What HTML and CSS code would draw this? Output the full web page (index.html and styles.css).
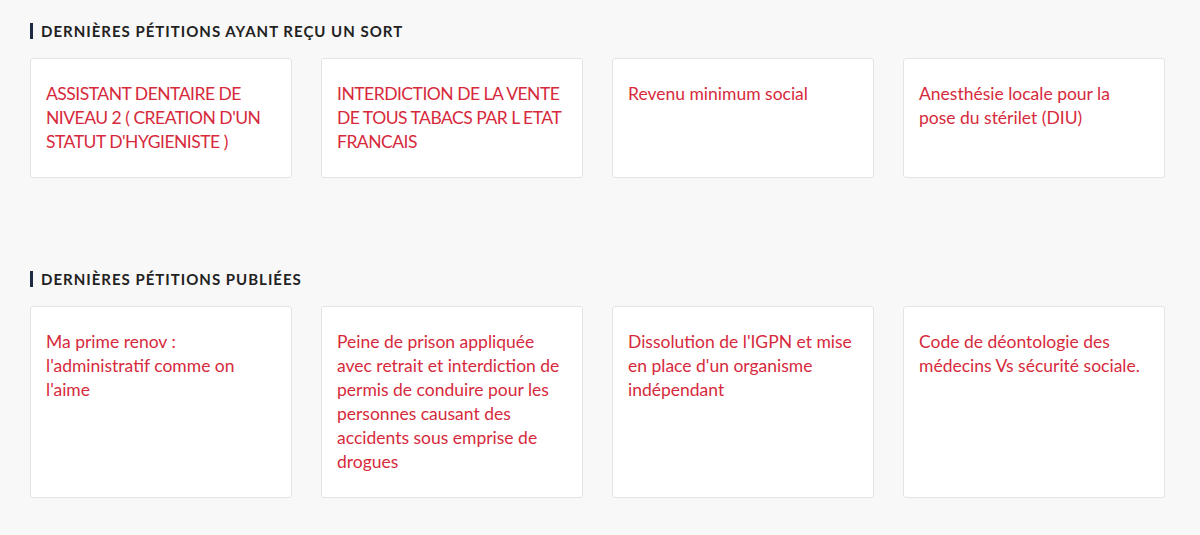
FILE: index.html
```html
<!doctype html>
<html lang="fr">
 <head>
  <meta charset="UTF-8">
  <title>Pétitions</title>
  <link rel="stylesheet" href="styles.css">
 </head>
 <body>
  <div id="all">
   <!-- pétitions ayant reçu un sort -->
   <section class="bloc">
    <h2 class="tit">Dernières pétitions ayant reçu un sort</h2>
    <div class="cards">
     <a class="card maj" href="#">ASSISTANT DENTAIRE DE NIVEAU 2 ( CREATION D'UN STATUT D'HYGIENISTE )</a>
     <a class="card maj" href="#">INTERDICTION DE LA VENTE DE TOUS TABACS PAR L ETAT FRANCAIS</a>
     <a class="card" href="#">Revenu minimum social</a>
     <a class="card" href="#">Anesthésie locale pour la pose du stérilet (DIU)</a>
    </div>
   </section>

   <!-- pétitions publiées -->
   <section class="bloc">
    <h2 class="tit">Dernières pétitions publiées</h2>
    <div class="cards">
     <a class="card" href="#">Ma prime renov : l'administratif comme on l'aime</a>
     <a class="card" href="#">Peine de prison appliquée avec retrait et interdiction de permis de conduire pour les personnes causant des accidents sous emprise de drogues</a>
     <a class="card" href="#">Dissolution de l'IGPN et mise en place d'un organisme indépendant</a>
     <a class="card" href="#">Code de déontologie des médecins Vs sécurité sociale.</a>
    </div>
   </section>
  </div>
 </body>
</html>
```

FILE: styles.css
```css
body {
margin: 0;
background: #f8f8f8;
font-family: Lato, "Open Sans", sans-serif;
}

#all {
width: 1135px;
padding: 23px 0 0 30px;
}

.bloc {
margin-bottom: 93px;
}

/* titre avec petite barre */
.tit {
margin: 0 0 19px 0;
padding-left: 8px;
border-left: 3px solid #1c2a44;
font-size: 15px;
line-height: 16px;
font-weight: bold;
letter-spacing: 1px;
text-transform: uppercase;
color: #222;
}

.cards {
display: grid;
grid-template-columns: repeat(4, 1fr);
gap: 29px;
}

.card {
display: block;
padding: 23px 15px;
background: #fff;
border: 1px solid #e4e4e4;
border-radius: 3px;
font-size: 17.5px;
line-height: 24px;
color: #d62a3c;
text-decoration: none;
}

/* titres en majuscules, un peu plus serrés */
.maj {
letter-spacing: -0.5px;
}
```
